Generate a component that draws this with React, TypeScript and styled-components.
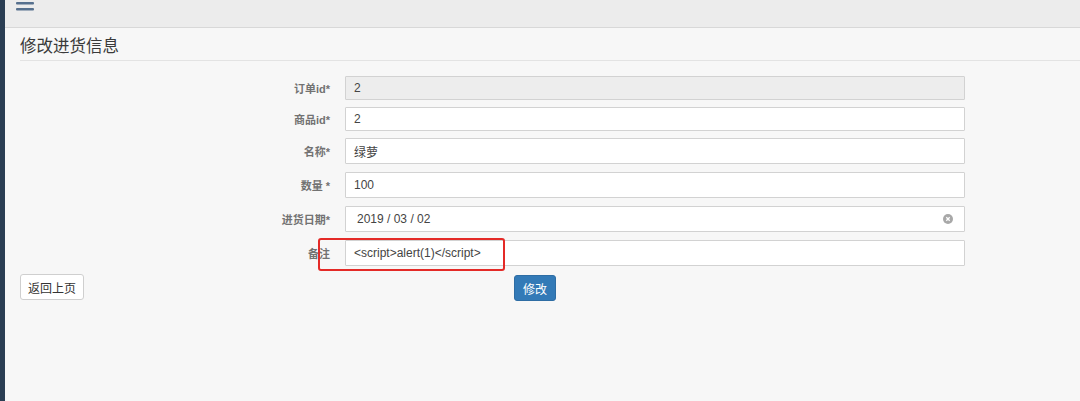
import styled, { createGlobalStyle } from "styled-components";

const GlobalStyle = createGlobalStyle`
  html, body {
    margin: 0;
    padding: 0;
    background: #f7f7f7;
  }
  body {
    font-family: "Liberation Sans", "Noto Sans CJK SC", sans-serif;
  }
`;

type Field = {
  label: string;
  value: string;
  disabled?: boolean;
  compact?: boolean;
  clear?: boolean;
  marked?: boolean;
};

const fields: Field[] = [
  { label: "订单id*", value: "2", disabled: true, compact: true },
  { label: "商品id*", value: "2", compact: true },
  { label: "名称*", value: "绿萝" },
  { label: "数量 *", value: "100" },
  { label: "进货日期*", value: "2019 / 03 / 02", clear: true },
  { label: "备注", value: "<script>alert(1)</script>", marked: true },
];

const App = () => {
  return (
    <>
      <GlobalStyle />
      <Page>
        <Sidebar />
        <Main>
          <TopBar>
            <MenuIcon width="20" height="14" viewBox="0 0 20 14">
              <rect x="1" y="2" width="18" height="2.4" rx="1" />
              <rect x="1" y="8" width="18" height="2.4" rx="1" />
            </MenuIcon>
          </TopBar>
          <Content>
            <Title>修改进货信息</Title>
            <Form>
              {fields.map((f) => (
                <Row key={f.label} $compact={f.compact}>
                  <Label>{f.label}</Label>
                  <InputBox $disabled={f.disabled} $compact={f.compact}>
                    <Value $date={f.clear}>{f.value}</Value>
                    {f.clear && (
                      <ClearIcon width="10" height="10" viewBox="0 0 10 10">
                        <circle cx="5" cy="5" r="5" fill="#a8a8a8" />
                        <path d="M3.3 3.3 L6.7 6.7 M6.7 3.3 L3.3 6.7" stroke="#fff" strokeWidth="1.3" />
                      </ClearIcon>
                    )}
                  </InputBox>
                  {f.marked && <Highlight />}
                </Row>
              ))}
              <Actions>
                <BackButton>返回上页</BackButton>
                <SubmitButton>修改</SubmitButton>
              </Actions>
            </Form>
          </Content>
        </Main>
      </Page>
    </>
  );
};

const Page = styled.div`
  display: flex;
  width: 1080px;
  height: 401px;
  overflow: hidden;
`;

const Sidebar = styled.div`
  width: 5px;
  flex-shrink: 0;
  background: #2a3e53;
`;

const Main = styled.div`
  flex: 1;
  display: flex;
  flex-direction: column;
  background: #f7f7f7;
`;

const TopBar = styled.div`
  height: 27px;
  background: #ececec;
  border-bottom: 1px solid #d8d8d8;
  display: flex;
  align-items: flex-start;
  padding-left: 10px;
`;

const MenuIcon = styled.svg`
  fill: #56708e;
`;

const Content = styled.div`
  padding-left: 15px;
`;

const Title = styled.h1`
  margin: 0;
  padding: 9px 0 4px 0;
  font-size: 16.5px;
  line-height: 19px;
  font-weight: normal;
  color: #3a3a3a;
  border-bottom: 1px solid #e3e3e3;
`;

const Form = styled.div`
  display: flex;
  flex-direction: column;
  padding-top: 15px;
`;

const Row = styled.div<{ $compact?: boolean }>`
  position: relative;
  display: flex;
  align-items: center;
  gap: 15px;
  margin-bottom: ${(p) => (p.$compact ? "7px" : "8px")};
`;

const Label = styled.div`
  width: 310px;
  text-align: right;
  font-size: 11px;
  font-weight: bold;
  color: #727272;
`;

const InputBox = styled.div<{ $disabled?: boolean; $compact?: boolean }>`
  width: 600px;
  height: ${(p) => (p.$compact ? "22px" : "24px")};
  box-sizing: content-box;
  border: 1px solid #d2d2d2;
  border-radius: 1px;
  background: ${(p) => (p.$disabled ? "#ededed" : "#ffffff")};
  display: flex;
  align-items: center;
  padding: 0 10px 0 8px;
`;

const Value = styled.span<{ $date?: boolean }>`
  flex: 1;
  font-size: 12px;
  color: #444;
  padding-left: ${(p) => (p.$date ? "3px" : "0")};
`;

const ClearIcon = styled.svg`
  flex-shrink: 0;
  margin-right: 1px;
`;

const Highlight = styled.div`
  position: absolute;
  left: 298px;
  top: -2px;
  width: 183px;
  height: 29px;
  border: 2px solid #e42a27;
  border-radius: 3px;
  pointer-events: none;
`;

const Actions = styled.div`
  display: flex;
  align-items: flex-start;
`;

const BackButton = styled.button`
  height: 26px;
  padding: 0 7px;
  background: #fff;
  border: 1px solid #cfcfcf;
  border-radius: 3px;
  font-family: inherit;
  font-size: 12px;
  color: #333;
`;

const SubmitButton = styled.button`
  margin-left: 430px;
  margin-top: 1px;
  height: 26px;
  padding: 0 8px;
  background: #337ab7;
  border: 1px solid #2e6da4;
  border-radius: 3px;
  font-family: inherit;
  font-size: 12px;
  color: #fff;
`;

export default App;
